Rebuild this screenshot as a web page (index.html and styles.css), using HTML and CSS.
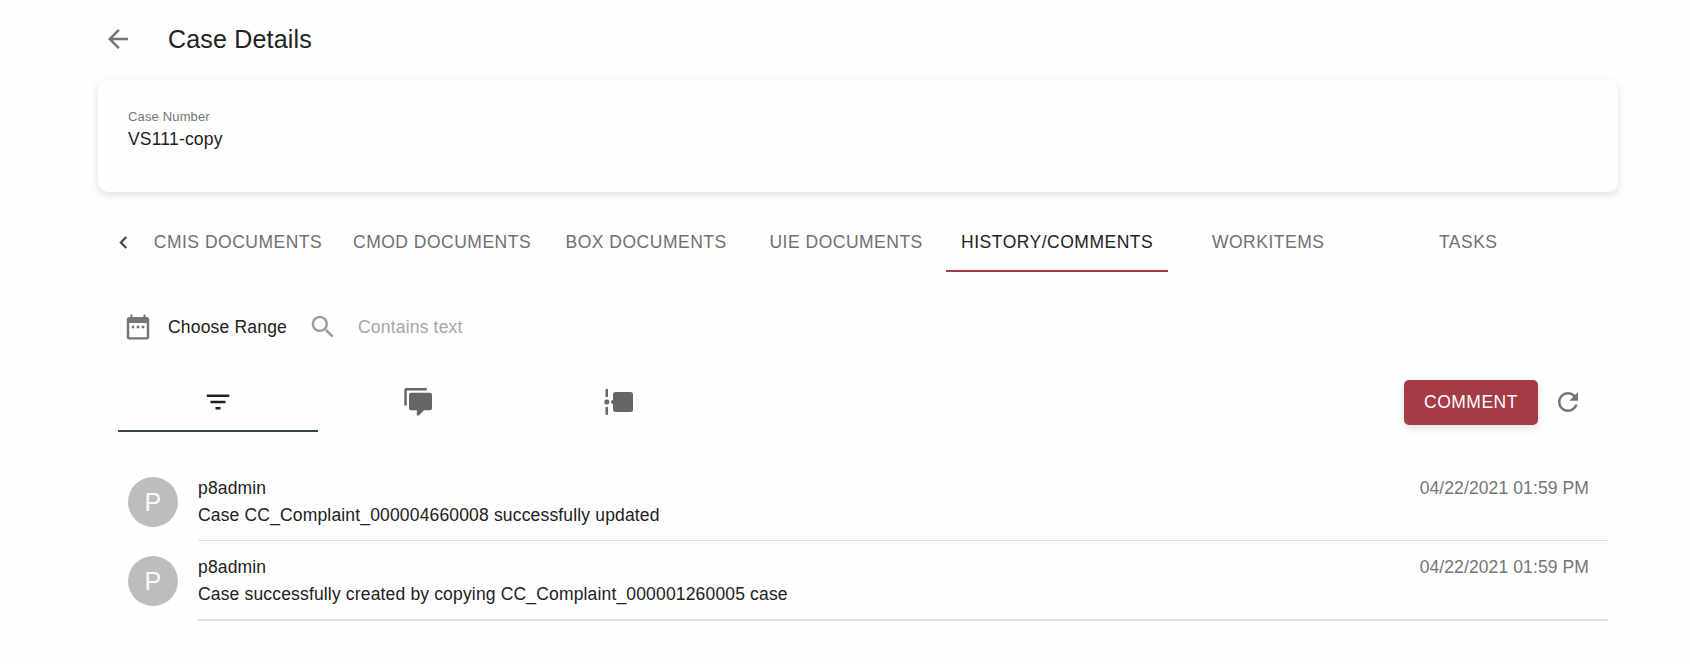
FILE: index.html
```html
<!DOCTYPE html>
<html lang="en">
<head>
<meta charset="utf-8">
<title>Case Details</title>
<link rel="stylesheet" href="styles.css">
</head>
<body>
<main class="page">
  <header class="header">
    <svg class="icon" viewBox="0 0 24 24"><path d="M20 11H7.83l5.59-5.59L12 4l-8 8 8 8 1.41-1.41L7.83 13H20v-2z"/></svg>
    <h1 class="title">Case Details</h1>
  </header>

  <section class="card">
    <div class="label">Case Number</div>
    <div class="value">VS111-copy</div>
  </section>

  <nav class="tabs">
    <svg class="icon icon-small scroll-left" viewBox="0 0 24 24"><path d="M15.41 16.59L10.83 12l4.58-4.59L14 6l-6 6 6 6z"/></svg>
    <a class="tab">CMIS DOCUMENTS</a>
    <a class="tab">CMOD DOCUMENTS</a>
    <a class="tab">BOX DOCUMENTS</a>
    <a class="tab">UIE DOCUMENTS</a>
    <a class="tab tab-active">HISTORY/COMMENTS</a>
    <a class="tab">WORKITEMS</a>
    <a class="tab">TASKS</a>
  </nav>

  <div class="filters">
    <svg class="icon" viewBox="0 0 24 24"><path d="M9 11H7v2h2v-2zm4 0h-2v2h2v-2zm4 0h-2v2h2v-2zm2-7h-1V2h-1.600v2H7.600V2H6v2H5c-1.110 0-1.990.9-1.990 2L3 20c0 1.100.89 2 2 2h14c1.100 0 2-.9 2-2V6c0-1.100-.9-2-2-2zm0 16.200H5V8.800h14v11.400z"/></svg>
    <span class="range">Choose Range</span>
    <svg class="icon search" viewBox="0 0 24 24"><path d="M15.5 14h-.79l-.28-.27C15.41 12.59 16 11.11 16 9.5 16 5.91 13.09 3 9.5 3S3 5.91 3 9.5 5.91 16 9.5 16c1.61 0 3.09-.59 4.23-1.57l.27.28v.79l5 4.99L20.49 19l-4.99-5zm-6 0C7.01 14 5 11.99 5 9.5S7.01 5 9.5 5 14 7.01 14 9.5 11.99 14 9.5 14z"/></svg>
    <span class="placeholder">Contains text</span>
  </div>

  <div class="toolbar">
    <div class="view view-active"><svg class="icon" viewBox="0 0 24 24"><path d="M10 18h4v-2h-4v2zM3 6v2h18V6H3zm3 7h12v-2H6v2z"/></svg></div>
    <div class="view"><svg class="icon" viewBox="0 0 30 30"><path d="M1.300 18.500V3.300Q1.300 1 3.600 1H23.800V3.500H3.800V18.500zM8 5.800H27Q29 5.800 29 7.800V21.200Q29 23.200 27 23.200H21L15.800 28.500H13.800V23.200H8Q6 23.200 6 21.200V7.800Q6 5.800 8 5.800z"/></svg></div>
    <div class="view"><svg class="icon" viewBox="0 0 30 30"><path d="M2.500 2H5v8H2.500zM2.500 20H5v7.800H2.500z"/><circle cx="3.800" cy="15" r="2.500"/><circle cx="10" cy="15" r="2"/><rect x="10" y="5" width="20" height="20" rx="2.500"/></svg></div>
    <button class="comment">COMMENT</button>
    <svg class="icon" viewBox="0 0 24 24"><path d="M17.65 6.35C16.2 4.9 14.21 4 12 4c-4.42 0-7.99 3.58-7.99 8s3.57 8 7.99 8c3.73 0 6.84-2.55 7.73-6h-2.08c-.82 2.33-3.04 4-5.65 4-3.31 0-6-2.69-6-6s2.69-6 6-6c1.66 0 3.14.69 4.22 1.78L13 11h7V4l-2.35 2.35z"/></svg>
  </div>

  <section class="history">
    <article class="entry">
      <div class="avatar">P</div>
      <div class="entry-body">
        <div><div class="line">p8admin</div><div class="line">Case CC_Complaint_000004660008 successfully updated</div></div>
        <time class="line date">04/22/2021 01:59 PM</time>
      </div>
    </article>
    <article class="entry">
      <div class="avatar">P</div>
      <div class="entry-body entry-last">
        <div><div class="line">p8admin</div><div class="line">Case successfully created by copying CC_Complaint_000001260005 case</div></div>
        <time class="line date">04/22/2021 01:59 PM</time>
      </div>
    </article>
  </section>
</main>
</body>
</html>
```
FILE: styles.css
```css
* { box-sizing: border-box; }
body {
  margin: 0;
  background: #fefefe;
  color: #212121;
  font: 17.5px/27px "Liberation Sans", Arial, sans-serif;
  letter-spacing: 0.01071em;
}
.page { width: 1520px; margin-left: 98px; }
.icon { width: 30px; height: 30px; flex: none; display: block; fill: #757575; }
.icon-small { width: 25px; height: 25px; }

.header { display: flex; align-items: center; gap: 35px; height: 79px; padding: 0 0 1px 5px; }
.title { margin: 0; font-size: 25px; font-weight: 400; letter-spacing: 0.0075em; }

.card {
  height: 113px;
  padding: 28px 30px;
  border-radius: 10px;
  background: #fefefe;
  box-shadow: 0 3px 8px rgba(0, 0, 0, 0.12);
}
.label { font-size: 13px; line-height: 20px; letter-spacing: 0.15px; color: #757575; }
.value { line-height: 24px; }

.tabs { display: flex; align-items: center; height: 60px; margin-top: 20px; padding-left: 13px; }
.scroll-left { margin-right: 2px; fill: #424242; }
.tab {
  display: flex;
  align-items: center;
  justify-content: center;
  flex: none;
  min-width: 200px;
  height: 60px;
  padding: 0 15px;
  letter-spacing: 0.02857em;
  color: #707070;
}
.tab-active { color: #212121; box-shadow: inset 0 -2px #a63a45; }

.filters { display: flex; align-items: center; height: 30px; margin-top: 40px; padding-left: 25px; }
.range { width: 140px; margin-left: 15px; }
.search { fill: #9e9e9e; }
.placeholder { margin-left: 20px; color: #a6a6a6; }

.toolbar { display: flex; align-items: center; height: 60px; margin-top: 30px; padding: 0 35px 0 20px; }
.view { display: flex; align-items: center; justify-content: center; width: 200px; height: 60px; }
.view .icon { fill: #666; overflow: visible; }
.view-active { box-shadow: inset 0 -2px #37474f; }
.view-active .icon { fill: #212121; }
.comment {
  width: 134px;
  height: 45px;
  margin: 0 15px 0 auto;
  padding: 0;
  border: 0;
  border-radius: 5px;
  background: #a63a45;
  color: #fff;
  font: inherit;
  letter-spacing: 0.02857em;
  box-shadow: 0 3px 8px rgba(0, 0, 0, 0.12);
}

.history { margin-top: 30px; padding: 0 10px 0 30px; }
.entry { display: flex; gap: 20px; letter-spacing: 0.0093em; }
.avatar {
  display: flex;
  align-items: center;
  justify-content: center;
  flex: none;
  width: 50px;
  height: 50px;
  margin-top: 15px;
  border-radius: 50%;
  background: #bdbdbd;
  color: #fafafa;
  font-size: 25px;
}
.entry-body {
  display: flex;
  justify-content: space-between;
  flex: 1;
  height: 79px;
  padding: 13px 19px 0 0;
  border-bottom: 1px solid #e0e0e0;
}
.entry-last { height: 80px; border-bottom-width: 2px; }
.line { line-height: 27px; }
.date { letter-spacing: 0.006em; color: #757575; }
```
